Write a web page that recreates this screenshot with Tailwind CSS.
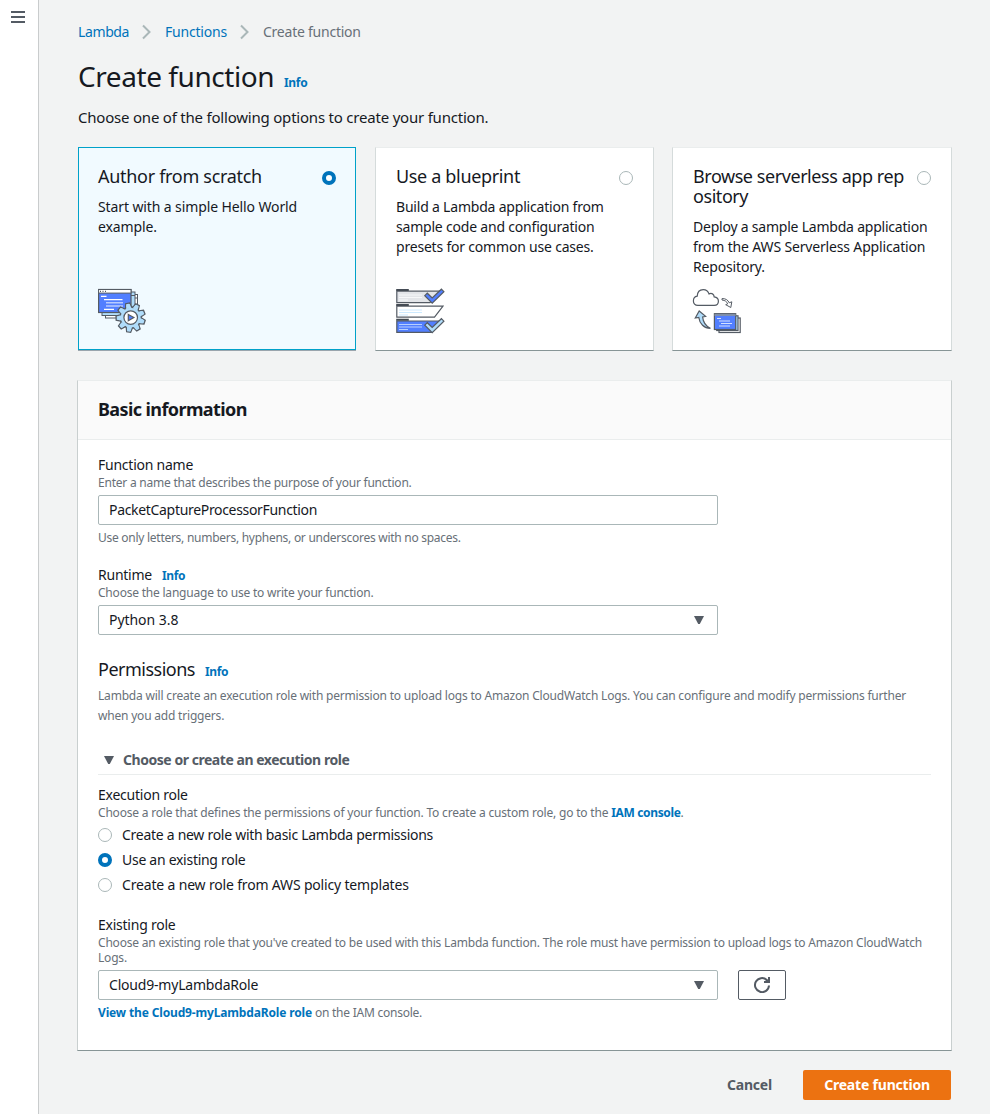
<!DOCTYPE html>
<html lang="en">
<head>
<meta charset="utf-8">
<title>Create function</title>
<script src="https://cdn.jsdelivr.net/npm/@tailwindcss/browser@4"></script>
</head>
<body class="flex h-[1114px] overflow-hidden bg-[#f2f3f3] font-['Noto_Sans',sans-serif] text-[14px] leading-5 tracking-[-0.24px] text-[#16191f]">
<aside class="w-[39px] shrink-0 border-r border-[#c9cccd] bg-white pl-[11px] pt-[11px]">
  <svg class="block" width="14" height="12" fill="#545b64"><path d="M0 0h14v2H0zM0 5h14v2H0zM0 10h14v2H0z"/></svg>
</aside>
<main class="flex w-[951px] shrink-0 flex-col pl-[39px]">
  <nav class="mt-[22px] flex h-5 items-center whitespace-nowrap">
    <a class="w-[51px] tracking-[-0.38px] text-[#0073bb]">Lambda</a>
    <svg class="mx-[13px] block" width="10" height="16" fill="none" stroke="#aab7b8" stroke-width="2"><path d="M1 1.5 7.5 8 1 14.5"/></svg>
    <a class="w-[62px] tracking-[-0.2px] text-[#0073bb]">Functions</a>
    <svg class="mx-[13px] block" width="10" height="16" fill="none" stroke="#aab7b8" stroke-width="2"><path d="M1 1.5 7.5 8 1 14.5"/></svg>
    <span class="text-[#687078]">Create function</span>
  </nav>
  <header class="mt-4 flex h-9 items-baseline whitespace-nowrap">
    <h1 class="w-[206px] text-[28px] leading-9 tracking-[-0.43px]">Create function</h1>
    <a class="text-[12px] font-bold tracking-[-0.3px] text-[#0073bb]">Info</a>
  </header>
  <p class="mt-[13px] h-5 text-[15px] leading-5 tracking-[-0.21px]">Choose one of the following options to create your function.</p>

  <section class="mt-5 flex h-[204px] w-[874px]">
    <div class="mr-[19px] flex h-[203px] w-[278px] shrink-0 flex-col border border-[#00a1c9] bg-[#f1faff] pl-[19px] pr-[19px] pt-[18px] shadow-[0_1px_0_0_#9aa5ad]">
      <div class="flex justify-between">
        <h2 class="text-[18px] leading-5 tracking-[-0.3px]">Author from scratch</h2>
        <span class="mt-[5px] size-[14px] shrink-0 rounded-full border-[4px] border-[#0073bb] bg-white"></span>
      </div>
      <p class="mt-[11px] whitespace-nowrap tracking-[-0.11px]">Start with a simple Hello World<br>example.</p>
      <svg class="mb-[14px] mt-auto block overflow-visible" width="50" height="48" stroke="#545b64">
        <rect x="7.5" y="7.5" width="32" height="23.5" fill="#fff"/>
        <path d="M34 11h6M36 7v10" fill="none"/>
        <rect x="4" y="5" width="33" height="23.5" fill="#b0dcfa"/>
        <path d="M33 8.500h4" fill="none"/>
        <rect x=".6" y="2.500" width="32.400" height="23" fill="#527fff" stroke-width="1.200"/>
        <rect x=".6" y="2.500" width="32.400" height="3.600" fill="#fff"/>
        <path d="M2 4.300h1M4.500 4.300h1M7 4.300h1" stroke-width="1.200"/>
        <path d="M3 9.300h5.500M6 12.600h18.500M6 22.400h10" stroke="#fff" stroke-width="1.200"/>
        <path d="M8 15.800h17M8 19h17" stroke="#b9ccff" stroke-width="1.500"/>
        <g transform="translate(32.700 30.600)">
          <defs><path id="tooth" d="M-3.100-10-2-14.600H2L3.100-10z"/></defs>
          <g fill="#b0dcfa" stroke-width="1.300">
            <use href="#tooth" transform="rotate(-12)"/><use href="#tooth" transform="rotate(28)"/><use href="#tooth" transform="rotate(68)"/><use href="#tooth" transform="rotate(108)"/><use href="#tooth" transform="rotate(148)"/><use href="#tooth" transform="rotate(188)"/><use href="#tooth" transform="rotate(228)"/><use href="#tooth" transform="rotate(268)"/><use href="#tooth" transform="rotate(308)"/>
            <circle r="10.600"/>
          </g>
          <g fill="#b0dcfa" stroke="none">
            <use href="#tooth" transform="rotate(-12) scale(.85 .92)"/><use href="#tooth" transform="rotate(28) scale(.85 .92)"/><use href="#tooth" transform="rotate(68) scale(.85 .92)"/><use href="#tooth" transform="rotate(108) scale(.85 .92)"/><use href="#tooth" transform="rotate(148) scale(.85 .92)"/><use href="#tooth" transform="rotate(188) scale(.85 .92)"/><use href="#tooth" transform="rotate(228) scale(.85 .92)"/><use href="#tooth" transform="rotate(268) scale(.85 .92)"/><use href="#tooth" transform="rotate(308) scale(.85 .92)"/>
          </g>
          <circle r="6.800" fill="#fff" stroke-width="1.200"/>
          <path d="M-2.400-3.200 3.200 0-2.400 3.200z" fill="#527fff" stroke-width="1.200"/>
        </g>
      </svg>
    </div>
    <div class="mr-[18px] flex w-[279px] shrink-0 flex-col border border-[#d5dbdb] border-t-[#eaeded] border-b-[#879596] bg-white pl-[20px] pr-5 pt-[18px]">
      <div class="flex justify-between">
        <h2 class="text-[18px] leading-5 tracking-[-0.34px]">Use a blueprint</h2>
        <span class="mt-[5px] size-[14px] shrink-0 rounded-full border border-[#aab7b8] bg-white"></span>
      </div>
      <p class="mt-[11px] whitespace-nowrap tracking-[-0.2px]">Build a Lambda application from<br>sample code and configuration<br>presets for common use cases.</p>
      <svg class="mb-[15px] mt-auto block overflow-visible" width="50" height="48" stroke="#545b64" stroke-width="1.200">
        <path d="M.8 4.200H45L34 15.700H.8z" fill="#e3e5e9"/>
        <path d="M.8 19.200H47L38.500 30.200H.8z" fill="#fff"/>
        <path d="M.8 34H45L36 45.300H.8z" fill="#527fff"/>
        <path d="M.2 3.100h12.600M.2 18h12.600M.2 32.700h12.600" stroke="#444b54" stroke-width="2"/>
        <path d="M3 8h23M3 10.500h23M3 13h9" stroke="#f6f7f9"/>
        <path d="M3 23h23M3 25.500h23M3 28h9" stroke="#cdeaff"/>
        <path d="M3 37.500h23M3 40h23M3 42.500h9" stroke="#b9d0ff"/>
        <path d="m28.800 8.700 2.500-2.500 4.900 4.700L45.400 2.200 47.900 4.700 36.200 16.200z" fill="#527fff"/>
        <path d="m28.800 38.200 2.500-2.500 4.900 4.700 9.200-8.700 2.500 2.500-11.700 11.500z" fill="#b0dcfa"/>
      </svg>
    </div>
    <div class="flex w-[280px] shrink-0 flex-col border border-[#d5dbdb] border-t-[#eaeded] border-b-[#879596] bg-white pl-[20px] pr-5 pt-[18px]">
      <div class="flex justify-between">
        <h2 class="whitespace-nowrap text-[18px] leading-5 tracking-[-0.44px]">Browse serverless app rep<br>ository</h2>
        <span class="mt-[5px] size-[14px] shrink-0 rounded-full border border-[#aab7b8] bg-white"></span>
      </div>
      <p class="mt-[11px] whitespace-nowrap tracking-[-0.16px]"><span class="tracking-[-0.22px]">Deploy a sample Lambda application</span><br>from the AWS Serverless Application<br>Repository.</p>
      <svg class="mb-[15px] mt-auto block overflow-visible" width="50" height="48" stroke="#545b64" stroke-width="1.200">
        <path d="M4.800 18.400C2 18.400.4 16.300.4 13.900c0-2.400 1.500-4.300 3.800-4.700C4.400 5.200 6.800 2.600 10.200 2.600c3 0 5 1.600 5.800 4.300 2.700-1.300 5 .2 5.200 3 2.600.3 4.200 2 4.200 4.300 0 2.500-1.700 4.200-4.200 4.200z" fill="#fff"/>
        <path d="M29 11.600c3.500-.2 6 1.300 7.200 4.200l2.600-1-1 5.700-5.100-2.800 2-.9c-.9-2.200-2.600-3.500-5.700-3.800z" fill="#fff" stroke-width="1"/>
        <path d="m6.200 24 6.400 5.400-3 .5c.5 5.400 3 9.200 7.800 11.500-6.300-.2-10.800-4.600-11.600-10.900l-3.500.5z" fill="#b0dcfa"/>
        <rect x="26" y="31" width="21.200" height="14.500" fill="#fff"/>
        <rect x="23.700" y="28.800" width="21.300" height="14.700" fill="#b0dcfa"/>
        <rect x="21.400" y="26.700" width="21.300" height="15.800" fill="#527fff"/>
        <path d="M21.400 28h21.300" stroke="#8b939c" stroke-width="1.600"/>
        <path d="M24 31.500h4M26 34h11M28 36.500h11M26 39h11" stroke="#d5e2ff" stroke-width="1"/>
      </svg>
    </div>
  </section>

  <section class="-ml-px mt-[29px] h-[671px] w-[875px] shrink-0 border border-[#c9cfcf] border-t-[#eaeded] border-b-[#879596] bg-white">
    <div class="flex h-[59px] items-center border-b border-[#eaeded] bg-[#fafafa] pb-[2px] pl-5">
      <h2 class="text-[18px] font-bold leading-[22px] tracking-[-0.6px]">Basic information</h2>
    </div>
    <div class="flex flex-col pl-[20px] pr-[20px] pt-[15px]">
      <label>Function name</label>
      <p class="h-[20px] text-[12px] leading-[15px] tracking-[-0.22px] text-[#687078]">Enter a name that describes the purpose of your function.</p>
      <div class="flex h-[30px] w-[620px] items-center rounded-[2px] border border-[#aab7b8] pl-[10px] tracking-[-0.32px]">PacketCaptureProcessorFunction</div>
      <p class="mt-[5px] h-[15px] text-[12px] leading-[15px] tracking-[-0.27px] text-[#687078]">Use only letters, numbers, hyphens, or underscores with no spaces.</p>

      <div class="mt-[20px] flex h-5 items-baseline"><label class="w-[64px]">Runtime</label><a class="text-[12px] font-bold tracking-[-0.4px] text-[#0073bb]">Info</a></div>
      <p class="h-[20px] text-[12px] leading-[15px] tracking-[-0.21px] text-[#687078]">Choose the language to use to write your function.</p>
      <div class="flex h-[30px] w-[620px] items-center justify-between rounded-[2px] border border-[#aab7b8] pl-[10px] pr-[13px] tracking-[-0.05px]">Python 3.8<svg width="10" height="8" class="-mt-px block" fill="#545b64"><path d="M0 0h10L5.800 8H4.200z"/></svg></div>

      <div class="mt-[23px] flex h-[22px] items-baseline"><h3 class="w-[107px] text-[18px] leading-[22px] tracking-[-0.5px]">Permissions</h3><a class="text-[12px] font-bold tracking-[-0.4px] text-[#0073bb]">Info</a></div>
      <p class="mt-[6px] h-10 whitespace-nowrap text-[12px] leading-5 tracking-[-0.197px] text-[#687078]">Lambda will create an execution role with permission to upload logs to Amazon CloudWatch Logs. You can configure and modify permissions further<br>when you add triggers.</p>

      <div class="mt-[24px] flex h-[25px] items-start border-b border-[#eaeded] pl-[6px] font-bold tracking-[-0.46px] text-[#545b64]"><svg width="10" height="8" class="mr-[9px] mt-[6px] block" fill="#545b64"><path d="M0 0h10L5.800 8H4.200z"/></svg><span class="h-5">Choose or create an execution role</span></div>

      <label class="mt-[10px]">Execution role</label>
      <p class="h-[20px] whitespace-nowrap text-[12px] leading-[15px] tracking-[-0.19px] text-[#687078]">Choose a role that defines the permissions of your function. To create a custom role, go to the <a class="font-bold tracking-[-0.35px] text-[#0073bb]">IAM console</a>.</p>
      <div class="flex flex-col gap-[5px] tracking-[-0.28px]">
        <div class="flex items-center gap-[10px]"><span class="size-[14px] rounded-full border border-[#aab7b8] bg-white"></span>Create a new role with basic Lambda permissions</div>
        <div class="flex items-center gap-[10px]"><span class="size-[14px] rounded-full border-[4px] border-[#0073bb] bg-white"></span>Use an existing role</div>
        <div class="flex items-center gap-[10px] tracking-[-0.17px]"><span class="size-[14px] rounded-full border border-[#aab7b8] bg-white"></span>Create a new role from AWS policy templates</div>
      </div>

      <label class="mt-[20px]">Existing role</label>
      <p class="h-[35px] whitespace-nowrap text-[12px] leading-[15px] tracking-[-0.198px] text-[#687078]">Choose an existing role that you've created to be used with this Lambda function. The role must have permission to upload logs to Amazon CloudWatch<br>Logs.</p>
      <div class="flex gap-5">
        <div class="flex h-[30px] w-[620px] items-center justify-between rounded-[2px] border border-[#aab7b8] pl-[10px] pr-[13px] tracking-[-0.2px]">Cloud9-myLambdaRole<svg width="10" height="8" class="-mt-px block" fill="#545b64"><path d="M0 0h10L5.800 8H4.200z"/></svg></div>
        <button class="flex h-[30px] w-12 items-center justify-center rounded-[2px] border border-[#545b64]">
          <svg class="block" width="16" height="16" fill="none" stroke="#545b64" stroke-width="2"><path d="M15 8.500A7 7 0 1 1 12.800 3L15 5"/><path d="M15 0v5h-5"/><path d="M12 3h3v2h-4z" fill="#545b64" stroke="none"/></svg>
        </button>
      </div>
      <p class="mt-[5px] h-[15px] text-[12px] leading-[15px] tracking-[-0.24px] text-[#687078]"><a class="font-bold tracking-[-0.15px] text-[#0073bb]">View the Cloud9-myLambdaRole role</a> on the IAM console.</p>
    </div>
  </section>

  <footer class="mt-[19px] flex w-[873px] items-center justify-end gap-[31px] font-bold tracking-[-0.2px]">
    <button class="text-[#545b64]">Cancel</button>
    <button class="h-[30px] w-[148px] rounded-[2px] bg-[#ec7211] text-white">Create function</button>
  </footer>
</main>
</body>
</html>
